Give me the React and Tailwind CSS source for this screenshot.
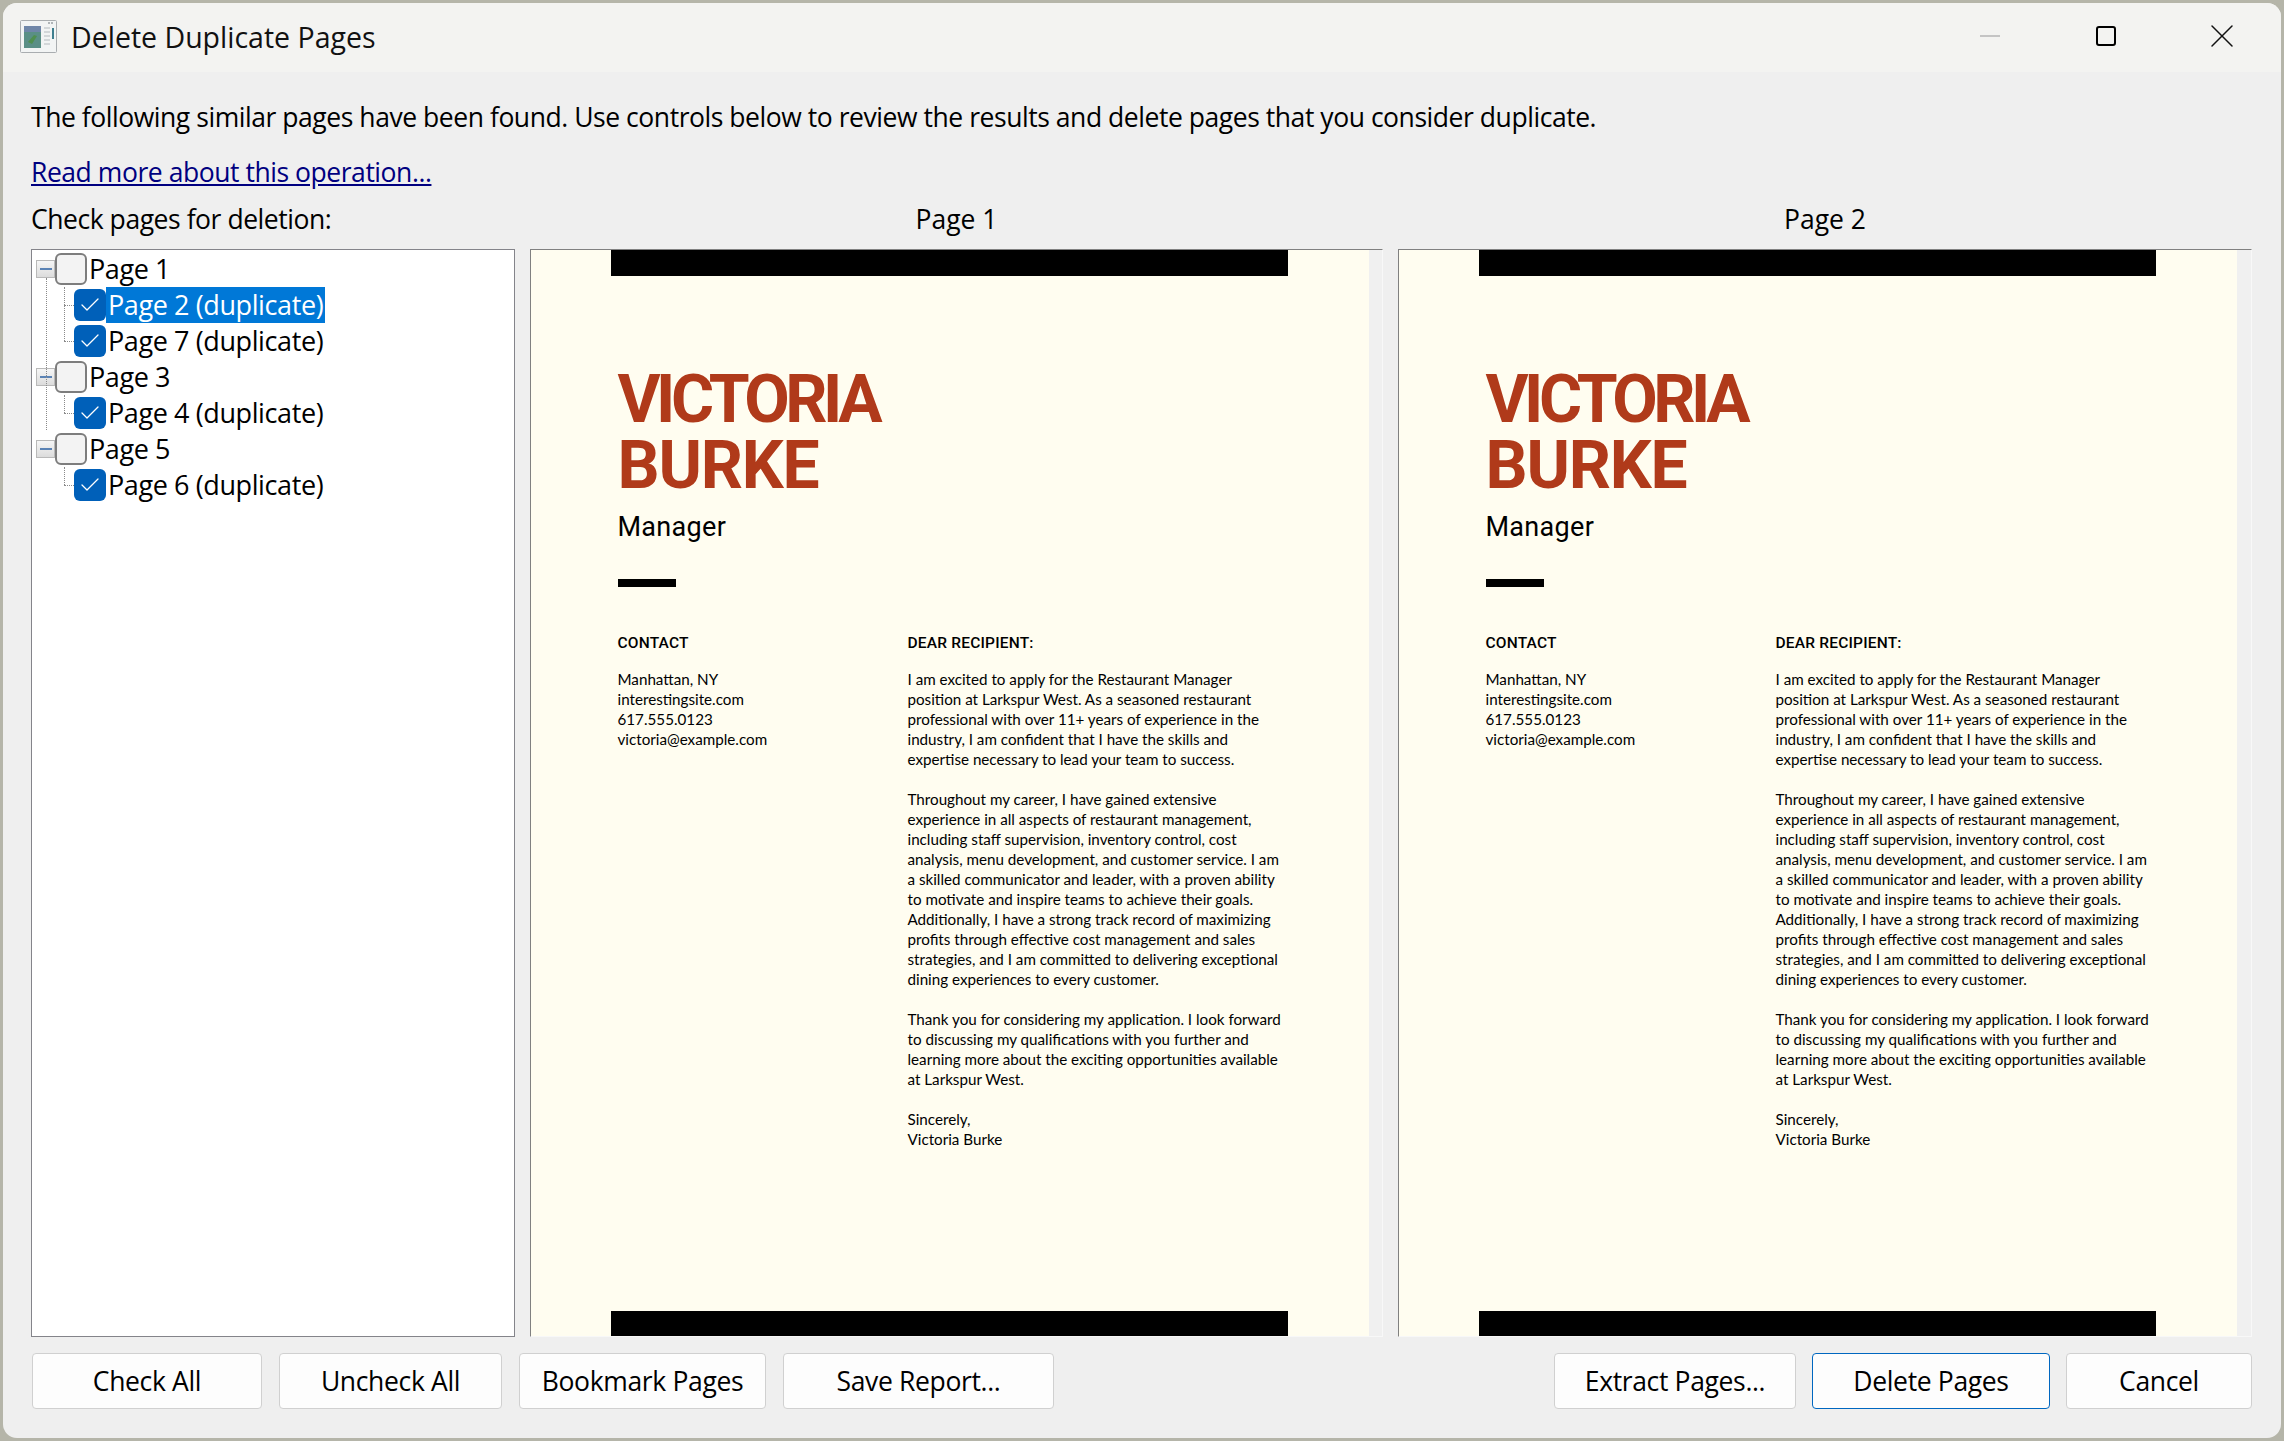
import { Check, X } from 'lucide-react';

const contact = ['Manhattan, NY', 'interestingsite.com', '617.555.0123', 'victoria@example.com'];

const letter = [
  [
    'I am excited to apply for the Restaurant Manager',
    'position at Larkspur West. As a seasoned restaurant',
    'professional with over 11+ years of experience in the',
    'industry, I am confident that I have the skills and',
    'expertise necessary to lead your team to success.',
  ],
  [
    'Throughout my career, I have gained extensive',
    'experience in all aspects of restaurant management,',
    'including staff supervision, inventory control, cost',
    'analysis, menu development, and customer service. I am',
    'a skilled communicator and leader, with a proven ability',
    'to motivate and inspire teams to achieve their goals.',
    'Additionally, I have a strong track record of maximizing',
    'profits through effective cost management and sales',
    'strategies, and I am committed to delivering exceptional',
    'dining experiences to every customer.',
  ],
  [
    'Thank you for considering my application. I look forward',
    'to discussing my qualifications with you further and',
    'learning more about the exciting opportunities available',
    'at Larkspur West.',
  ],
  ['Sincerely,', 'Victoria Burke'],
];

const tree = [
  { label: 'Page 1', children: ['Page 2 (duplicate)', 'Page 7 (duplicate)'], selected: 'Page 2 (duplicate)' },
  { label: 'Page 3', children: ['Page 4 (duplicate)'] },
  { label: 'Page 5', children: ['Page 6 (duplicate)'] },
];

function WindowIcon() {
  return (
    <svg width="37" height="33" viewBox="0 0 37 33" className="shrink-0">
      <rect x="0.5" y="0.5" width="36" height="32" rx="1" fill="#f2f4f4" stroke="#a9adb0" />
      <rect x="4" y="6" width="17" height="22" fill="#5a8f86" />
      <rect x="4" y="6" width="17" height="6" fill="#6f86a8" />
      <path d="M8 22l6-7 3 1-5 8z" fill="#4f8f4f" />
      <path d="M24 8h6M24 12h6M24 16h6M24 20h6M24 24h6" stroke="#c9cdd0" strokeWidth="1.5" />
      <rect x="32" y="8" width="2" height="11" fill="#3f7f8f" />
      <path d="M28 3h6" stroke="#9aa0a4" strokeWidth="1.5" strokeDasharray="2 1" />
    </svg>
  );
}

function TreeCheckbox({ checked }) {
  if (checked) {
    return (
      <span className="w-[32px] h-[32px] shrink-0 rounded-[6px] bg-[#0060b9] flex items-center justify-center">
        <Check size={24} strokeWidth={1.3} className="text-white" />
      </span>
    );
  }
  return <span className="w-[32px] h-[32px] shrink-0 rounded-[6px] bg-[#f3f3f3] border-2 border-[#7d7d7d]" />;
}

function TreeView() {
  return (
    <div className="relative bg-white border border-[#84848a] pt-[1px] text-[27px] tracking-[-0.4px] leading-[36px] text-black overflow-hidden">
      {/* dotted trunk joining the three root rows */}
      <span className="absolute left-[14px] top-[28px] h-[152px] border-l border-dotted border-[#8a8a8a]" />
      {tree.map((node) => (
        <div key={node.label}>
          <div className="flex items-center h-[36px] pl-[4px]">
            <span className="w-[19px] h-[18px] shrink-0 bg-gradient-to-b from-[#f6f6f6] to-[#dcdcdc] border border-[#b9b9b9] flex items-center justify-center">
              <span className="w-[12px] h-[2px] bg-[#5b83b5]" />
            </span>
            <TreeCheckbox />
            <span className="pl-[2px] whitespace-nowrap">{node.label}</span>
          </div>
          {node.children.map((child, i) => (
            <div key={child} className="relative flex items-center h-[36px] pl-[42px]">
              <span className={`absolute left-[32px] border-l border-dotted border-[#8a8a8a] ${i === 0 ? 'top-0 h-[18px]' : '-top-[18px] h-[36px]'}`} />
              <span className="absolute left-[32px] top-[18px] w-[10px] border-t border-dotted border-[#8a8a8a]" />
              <TreeCheckbox checked />
              <span className={`pl-[2px] pr-[2px] h-[36px] whitespace-nowrap ${node.selected === child ? 'bg-[#0078d7] text-white' : ''}`}>
                {child}
              </span>
            </div>
          ))}
        </div>
      ))}
    </div>
  );
}

function ResumePage() {
  return (
    <div className="flex border-t border-l border-[#808080] border-r border-r-[#f8f8f8] border-b border-b-[#f8f8f8] bg-[#f0f0f0] overflow-hidden">
      <div className="w-[838px] h-full bg-[#fffdf0] flex flex-col text-black tracking-normal">
        <div className="ml-[80px] w-[677px] h-[26px] bg-black shrink-0" />
        <div className="pl-[86.5px] flex-1">
          <h2 className="mt-[91px] font-['Roboto',sans-serif] font-bold text-[66px] leading-[66px] text-[#b03a1a]">
            <span className="block tracking-[-4.5px]">VICTORIA</span>
            <span className="block tracking-[-1.2px]">BURKE</span>
          </h2>
          <div className="mt-[8px] font-['Roboto',sans-serif] text-[27px] leading-[40px] tracking-[0.3px]">Manager</div>
          <div className="mt-[32px] w-[58px] h-[8px] bg-black" />
          <div className="mt-[44px] grid grid-cols-[290px_1fr] font-['Lato',sans-serif] text-[15.2px] leading-[20px]">
            <div>
              <div className="font-['Roboto',sans-serif] font-medium text-[15.5px] tracking-[0.2px] leading-[24px] mb-[14px]">CONTACT</div>
              {contact.map((line) => (
                <div key={line} className="whitespace-nowrap">{line}</div>
              ))}
            </div>
            <div>
              <div className="font-['Roboto',sans-serif] font-medium text-[15.5px] tracking-[0.2px] leading-[24px] mb-[14px]">DEAR RECIPIENT:</div>
              {letter.map((para, i) => (
                <div key={i} className="mb-[20px]">
                  {para.map((line) => (
                    <div key={line} className="whitespace-nowrap">{line}</div>
                  ))}
                </div>
              ))}
            </div>
          </div>
        </div>
        <div className="ml-[80px] w-[677px] h-[25px] bg-black shrink-0" />
      </div>
    </div>
  );
}

function DialogButton({ label, width, primary }) {
  return (
    <button className={`${width} h-[56px] rounded-[4px] bg-[#fdfdfd] border text-[26.5px] tracking-[-0.35px] text-black ${primary ? 'border-[#0067c0]' : 'border-[#d0d0d0]'}`}>
      {label}
    </button>
  );
}

export default function App() {
  return (
    <div className="w-[2284px] h-[1441px] bg-[#b5b5a9] py-[3px] pr-[3px] pl-[3px] font-['Open_Sans',sans-serif] overflow-hidden">
      <div className="h-full rounded-[14px] bg-[#efefef] overflow-hidden flex flex-col">
        {/* Title bar */}
        <div className="h-[69px] pb-[3px] bg-[#f3f3f1] flex items-center shrink-0">
          <div className="ml-[17px]"><WindowIcon /></div>
          <div className="ml-[14px] mt-[2px] text-[28.5px] text-[#111]">Delete Duplicate Pages</div>
          <div className="ml-auto mr-[1px] flex items-center">
            <div className="w-[116px] flex justify-center">
              <span className="w-[20px] border-t-2 border-[#c4c4c4]" />
            </div>
            <div className="w-[116px] flex justify-center">
              <span className="w-[20px] h-[20px] rounded-[3px] border-2 border-black" />
            </div>
            <div className="w-[116px] flex justify-center">
              <X size={40} strokeWidth={0.9} className="text-[#111]" />
            </div>
          </div>
        </div>

        <div className="flex-1 px-[28px] pt-[25px] text-[26.5px] tracking-[-0.45px] leading-[40px] text-black">
          <p className="whitespace-nowrap">The following similar pages have been found. Use controls below to review the results and delete pages that you consider duplicate.</p>
          <a href="#" className="block w-fit mt-[15px] text-[#000080] underline">Read more about this operation...</a>

          <div className="mt-[7px] grid grid-cols-[484px_853px_854px] grid-rows-[40px_1088px] gap-x-[15px] gap-y-[10px]">
            <div>Check pages for deletion:</div>
            <div className="text-center tracking-normal">Page 1</div>
            <div className="text-center tracking-normal">Page 2</div>
            <TreeView />
            <ResumePage />
            <ResumePage />
          </div>

          <div className="mt-[16px] mx-[1px] flex items-center">
            <div className="flex gap-[17px]">
              <DialogButton label="Check All" width="w-[230px]" />
              <DialogButton label="Uncheck All" width="w-[223px]" />
              <DialogButton label="Bookmark Pages" width="w-[247px]" />
              <DialogButton label="Save Report..." width="w-[271px]" />
            </div>
            <div className="ml-auto flex gap-[16px]">
              <DialogButton label="Extract Pages..." width="w-[242px]" />
              <DialogButton label="Delete Pages" width="w-[238px]" primary />
              <DialogButton label="Cancel" width="w-[186px]" />
            </div>
          </div>
        </div>
      </div>
    </div>
  );
}
